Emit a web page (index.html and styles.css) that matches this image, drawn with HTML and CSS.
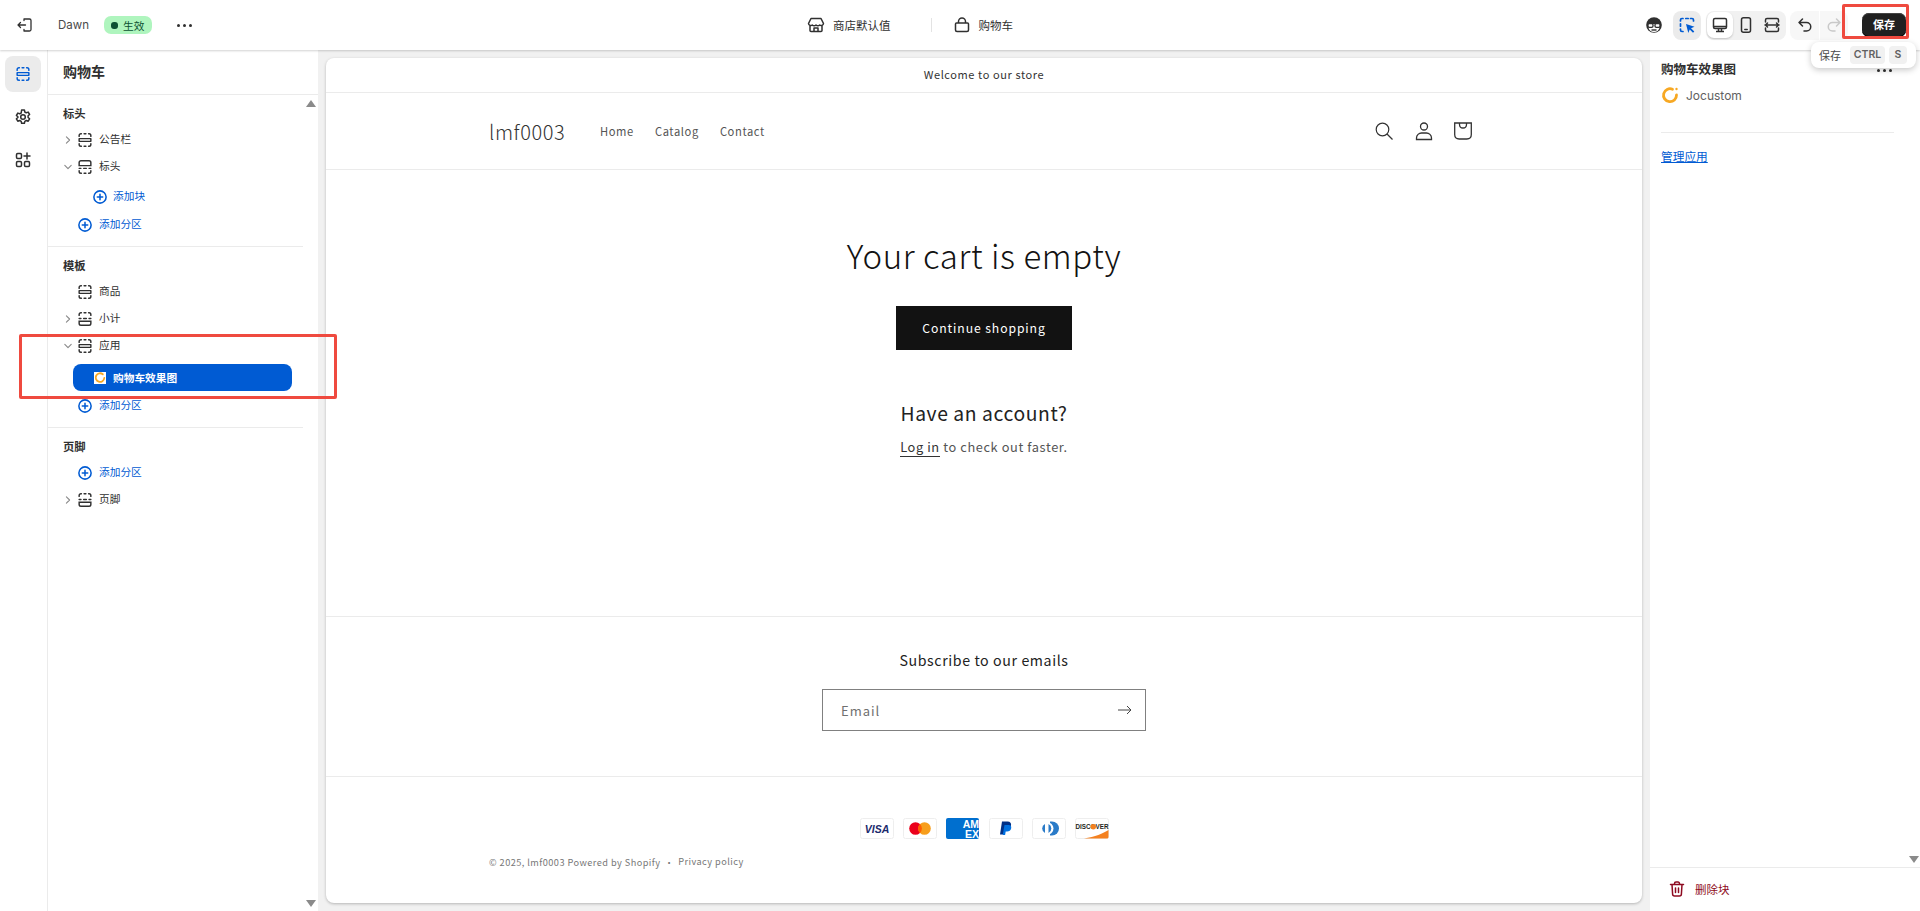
FILE: index.html
```html
<!DOCTYPE html>
<html lang="zh-CN">
<head>
<meta charset="utf-8">
<title>Dawn - 购物车</title>
<link rel="stylesheet" href="styles.css">
</head>
<body>
<svg class="defs" width="0" height="0">
  <defs>
    <g id="sec" fill="none" stroke="currentColor" stroke-width="1.600" stroke-linecap="round">
      <path d="M3.500 6V5A2 2 0 0 1 5.500 3H6M9 3h2M14 3h.5A2 2 0 0 1 16.500 5V6"/>
      <path d="M3.500 8.500h13M3.500 11.500h13M3.500 8.500v3M16.500 8.500v3"/>
      <path d="M3.500 14V15A2 2 0 0 0 5.500 17H6M9 17h2M14 17h.5A2 2 0 0 0 16.500 15V14"/>
    </g>
    <g id="sec-head" fill="none" stroke="currentColor" stroke-width="1.600" stroke-linecap="round">
      <path d="M5.500 3h9A2 2 0 0 1 16.500 5V8.500h-13V5A2 2 0 0 1 5.500 3Z"/>
      <path d="M3.500 11.500h2M8.500 11.500h3M14.500 11.500h2M3.500 14V15A2 2 0 0 0 5.500 17H6M9 17h2M14 17h.5A2 2 0 0 0 16.500 15V14"/>
    </g>
    <g id="sec-foot" fill="none" stroke="currentColor" stroke-width="1.600" stroke-linecap="round">
      <path d="M3.500 6V5A2 2 0 0 1 5.500 3H6M9 3h2M14 3h.5A2 2 0 0 1 16.500 5V6M3.500 9.500h2M8.500 9.500h3M14.500 9.500h2"/>
      <path d="M3.500 12.500h13V15a2 2 0 0 1-2 2h-9a2 2 0 0 1-2-2Z"/>
    </g>
    <g id="plus" fill="none" stroke="#005bd3" stroke-width="1.700" stroke-linecap="round">
      <circle cx="10" cy="10" r="6.800"/>
      <path d="M10 7v6M7 10h6"/>
    </g>
    <g id="chev-r" fill="none" stroke="#8a8a8a" stroke-width="1.400" stroke-linecap="round" stroke-linejoin="round"><path d="M8 6l4 4-4 4"/></g>
    <g id="chev-d" fill="none" stroke="#8a8a8a" stroke-width="1.400" stroke-linecap="round" stroke-linejoin="round"><path d="M6 8l4 4 4-4"/></g>
  </defs>
</svg>

<div class="app">
  <header class="topbar">
    <div class="top-left">
      <svg class="ic20 exit" viewBox="0 0 20 20"><path d="M9 4h5.500A1.500 1.500 0 0 1 16 5.500v9a1.500 1.500 0 0 1-1.500 1.500H9M10.500 10H3M5.500 7.500L3 10l2.500 2.500M9 4v1.500M9 16v-1.500" fill="none" stroke="currentColor" stroke-width="1.300" stroke-linecap="round" stroke-linejoin="round"/></svg>
      <span class="theme">Dawn</span>
      <span class="badge"><i class="badge-dot"></i>生效</span>
      <span class="dots"><i></i><i></i><i></i></span>
    </div>
    <div class="top-center">
      <svg class="ic20" viewBox="0 0 20 20"><path d="M5 3.500h10l2.500 5a2.300 2.300 0 0 1-3.800 1.500 2.500 2.500 0 0 1-3.700 0 2.500 2.500 0 0 1-3.700 0A2.300 2.300 0 0 1 2.500 8.500ZM4 10.500v5a1 1 0 0 0 1 1h10a1 1 0 0 0 1-1v-5M8 16.500v-3.500h4v3.500" fill="none" stroke="currentColor" stroke-width="1.500" stroke-linejoin="round"/></svg>
      <span class="center-label">商店默认值</span>
      <i class="vline"></i>
      <svg class="ic20" viewBox="0 0 20 20"><path d="M6.500 8V6.500a3.500 3.500 0 0 1 7 0V8M4.500 8h11A1 1 0 0 1 16.500 9v6a1.500 1.500 0 0 1-1.500 1.500H5A1.500 1.500 0 0 1 3.500 15V9a1 1 0 0 1 1-1Z" fill="none" stroke="currentColor" stroke-width="1.500" stroke-linejoin="round"/></svg>
      <span class="center-label">购物车</span>
    </div>
    <div class="top-right">
      <svg class="ic20 glasses" viewBox="0 0 20 20"><circle cx="10" cy="10" r="7.800" fill="currentColor"/><circle cx="10" cy="11.500" r="5.600" fill="#fff"/><path d="M4 6h12v3H4Z" fill="currentColor"/><rect x="4" y="8.500" width="5" height="3.800" rx="1.300" fill="#fff" stroke="currentColor" stroke-width="1.300"/><rect x="11" y="8.500" width="5" height="3.800" rx="1.300" fill="#fff" stroke="currentColor" stroke-width="1.300"/><path d="M7.500 15h5" stroke="currentColor" stroke-width="1.400"/></svg>
      <span class="tool inspector">
        <svg class="ic20" viewBox="0 0 20 20"><path d="M3.500 6V5A1.500 1.500 0 0 1 5 3.500H6M8.800 3.500h2.400M13.500 3.500H15A1.500 1.500 0 0 1 16.500 5V6M3.500 8.800v2.400M3.500 14V15A1.500 1.500 0 0 0 5 16.500H6" fill="none" stroke="#005bd3" stroke-width="1.700" stroke-linecap="round"/><path d="M9 9l8.500 2.800-3.500 1.400 3.300 3.300-1.300 1.300-3.300-3.300-1.400 3.500Z" fill="#005bd3"/></svg>
      </span>
      <span class="viewports">
        <span class="vp vp-on"><svg class="ic20" viewBox="0 0 20 20"><path d="M5 3.500h10A1.500 1.500 0 0 1 16.500 5v6.500H3.500V5A1.500 1.500 0 0 1 5 3.500ZM3.500 11.500V12A1.500 1.500 0 0 0 5 13.500h10a1.500 1.500 0 0 0 1.500-1.500v-.5M8.500 13.500v3M11.500 13.500v3M6 16.500h8" fill="none" stroke="currentColor" stroke-width="1.500" stroke-linejoin="round"/></svg></span>
        <span class="vp"><svg class="ic20" viewBox="0 0 20 20"><rect x="5.500" y="2.800" width="9" height="14.400" rx="2" fill="none" stroke="currentColor" stroke-width="1.500"/><path d="M8.800 14.500h2.400" stroke="currentColor" stroke-width="1.500" stroke-linecap="round"/></svg></span>
        <span class="vp"><svg class="ic20" viewBox="0 0 20 20"><path d="M3.500 7V5A1.500 1.500 0 0 1 5 3.500h10A1.500 1.500 0 0 1 16.500 5v2M3.500 13v2A1.500 1.500 0 0 0 5 16.500h10a1.500 1.500 0 0 0 1.500-1.500v-2M3 10h14M5.500 8l-2 2 2 2M14.500 8l2 2-2 2" fill="none" stroke="currentColor" stroke-width="1.500" stroke-linecap="round" stroke-linejoin="round"/></svg></span>
      </span>
      <span class="history">
        <svg class="ic20" viewBox="0 0 20 20"><path d="M7.500 4L4 7.500 7.500 11M4 7.500h7.500a4 4 0 0 1 0 8.500H9" fill="none" stroke="currentColor" stroke-width="1.500" stroke-linecap="round" stroke-linejoin="round"/></svg>
        <i class="history-sep"></i>
        <svg class="ic20 redo" viewBox="0 0 20 20"><path d="M12.500 4L16 7.500 12.500 11M16 7.500H8.500a4 4 0 0 0 0 8.500H11" fill="none" stroke="currentColor" stroke-width="1.500" stroke-linecap="round" stroke-linejoin="round"/></svg>
      </span>
      <button class="save" type="button">保存</button>
    </div>
  </header>

  <div class="workspace">
    <nav class="rail">
      <span class="rail-btn rail-on"><svg class="ic18 blue" viewBox="0 0 20 20"><use href="#sec"/></svg></span>
      <span class="rail-btn"><svg class="ic20" viewBox="0 0 20 20"><path d="M8.600 3h2.800l.4 2 1.500.8 1.900-.7 1.400 2.400-1.500 1.300v1.700l1.500 1.300-1.400 2.400-1.900-.7-1.500.8-.4 2H8.600l-.4-2-1.500-.8-1.900.7-1.400-2.400 1.500-1.300V9.800L3.400 8.500l1.400-2.400 1.900.7 1.500-.8Z" fill="none" stroke="currentColor" stroke-width="1.500" stroke-linejoin="round"/><circle cx="10" cy="10" r="2.300" fill="none" stroke="currentColor" stroke-width="1.500"/></svg></span>
      <span class="rail-btn"><svg class="ic20" viewBox="0 0 20 20"><g fill="none" stroke="currentColor" stroke-width="1.500"><rect x="3.500" y="3.500" width="5" height="5" rx="1.200"/><rect x="3.500" y="11.500" width="5" height="5" rx="1.200"/><rect x="11.500" y="11.500" width="5" height="5" rx="1.200"/><path d="M14 3v6M11 6h6" stroke-linecap="round"/></g></svg></span>
    </nav>

    <aside class="sidebar">
      <h1 class="side-title">购物车</h1>
      <div class="side-scroll">
        <section class="group">
          <h2 class="group-title">标头</h2>
          <div class="row"><svg class="chev" viewBox="0 0 20 20"><use href="#chev-r"/></svg><svg class="ic20" viewBox="0 0 20 20"><use href="#sec"/></svg><span>公告栏</span></div>
          <div class="row"><svg class="chev" viewBox="0 0 20 20"><use href="#chev-d"/></svg><svg class="ic20" viewBox="0 0 20 20"><use href="#sec-head"/></svg><span>标头</span></div>
          <div class="row row-add row-sub"><svg class="ic20" viewBox="0 0 20 20"><use href="#plus"/></svg><span>添加块</span></div>
          <div class="row row-add"><svg class="ic20" viewBox="0 0 20 20"><use href="#plus"/></svg><span>添加分区</span></div>
        </section>
        <section class="group">
          <h2 class="group-title">模板</h2>
          <div class="row"><i class="chev"></i><svg class="ic20" viewBox="0 0 20 20"><use href="#sec"/></svg><span>商品</span></div>
          <div class="row"><svg class="chev" viewBox="0 0 20 20"><use href="#chev-r"/></svg><svg class="ic20" viewBox="0 0 20 20"><use href="#sec-foot"/></svg><span>小计</span></div>
          <div class="row"><svg class="chev" viewBox="0 0 20 20"><use href="#chev-d"/></svg><svg class="ic20" viewBox="0 0 20 20"><use href="#sec"/></svg><span>应用</span></div>
          <div class="row-selected">
            <span class="app-thumb"><svg viewBox="0 0 12 12" width="12" height="12"><path d="M8.800 2.300A4.300 4.300 0 1 0 10.300 6" fill="none" stroke="#f7a823" stroke-width="1.800" stroke-linecap="round"/></svg></span>
            <span>购物车效果图</span>
          </div>
          <div class="row row-add"><svg class="ic20" viewBox="0 0 20 20"><use href="#plus"/></svg><span>添加分区</span></div>
        </section>
        <section class="group group-last">
          <h2 class="group-title">页脚</h2>
          <div class="row row-add"><svg class="ic20" viewBox="0 0 20 20"><use href="#plus"/></svg><span>添加分区</span></div>
          <div class="row"><svg class="chev" viewBox="0 0 20 20"><use href="#chev-r"/></svg><svg class="ic20" viewBox="0 0 20 20"><use href="#sec-foot"/></svg><span>页脚</span></div>
        </section>
      </div>
      <i class="arrow-up arrow-side-up"></i>
      <i class="arrow-down arrow-side-down"></i>
    </aside>

    <main class="canvas">
      <div class="store">
        <div class="announce">Welcome to our store</div>
        <div class="store-header">
          <div class="store-brand">
            <span class="logo">lmf0003</span>
            <span class="store-nav"><a>Home</a><a>Catalog</a><a>Contact</a></span>
          </div>
          <div class="store-icons">
            <svg class="ic-store" viewBox="0 0 20 20"><circle cx="8.500" cy="8.500" r="6.300" fill="none" stroke="currentColor" stroke-width="1.200"/><path d="M13 13l5.500 5.500" stroke="currentColor" stroke-width="1.200"/></svg>
            <svg class="ic-store" viewBox="0 0 20 20"><circle cx="10" cy="5.500" r="3.500" fill="none" stroke="currentColor" stroke-width="1.300"/><path d="M2.500 18.500v-1.500c0-3 2.500-5 5-5h5c2.500 0 5 2 5 5v1.500Z" fill="none" stroke="currentColor" stroke-width="1.300"/></svg>
            <svg class="ic-store" viewBox="0 0 20 20"><path d="M1.700 2h16.600v11.500c0 3-1.500 4.500-4.500 4.500H6.200c-3 0-4.500-1.500-4.500-4.500Z" fill="none" stroke="currentColor" stroke-width="1.300"/><path d="M6.500 2v1.500c0 2 1.500 3.500 3.500 3.500s3.500-1.500 3.500-3.500V2" fill="none" stroke="currentColor" stroke-width="1.300"/></svg>
          </div>
        </div>
        <div class="cart">
          <h2 class="cart-title">Your cart is empty</h2>
          <a class="cart-btn">Continue shopping</a>
          <h3 class="cart-account">Have an account?</h3>
          <p class="cart-login"><a class="u">Log in</a> to check out faster.</p>
        </div>
        <div class="subscribe">
          <h4 class="sub-title">Subscribe to our emails</h4>
          <div class="email">
            <span>Email</span>
            <svg viewBox="0 0 14 10" width="14" height="10"><path d="M0 5h13M9 1l4 4-4 4" fill="none" stroke="#444" stroke-width="1"/></svg>
          </div>
        </div>
        <div class="store-footer">
          <div class="pays">
            <svg class="pay" viewBox="0 0 34 21"><rect x=".5" y=".5" width="33" height="20" rx="2" fill="#fff" stroke="#eee"/><text x="17" y="15" text-anchor="middle" class="t-visa">VISA</text></svg>
            <svg class="pay" viewBox="0 0 34 21"><rect x=".5" y=".5" width="33" height="20" rx="2" fill="#fff" stroke="#eee"/><circle cx="12.500" cy="10.500" r="6.300" fill="#eb001b"/><circle cx="21.500" cy="10.500" r="6.300" fill="#f79e1b"/><path d="M17 6a6.300 6.300 0 0 1 0 9 6.300 6.300 0 0 1 0-9Z" fill="#ff5f00"/></svg>
            <svg class="pay" viewBox="0 0 34 21"><rect width="33" height="21" rx="2" fill="#006fcf"/><text x="33" y="10" text-anchor="end" class="t-amex">AM</text><text x="33" y="19.500" text-anchor="end" class="t-amex">EX</text></svg>
            <svg class="pay" viewBox="0 0 34 21"><rect x=".5" y=".5" width="33" height="20" rx="2" fill="#fff" stroke="#eee"/><path d="M13 3.500h5.500c2.800 0 4 1.700 3.500 4-.6 2.800-2.800 4-5 4h-1.500l-.8 5H11Z" fill="#003087"/><path d="M15.500 7h4.200c1.800 0 2.900 1.100 2.500 3.200-.4 2.100-2.200 3.300-4 3.300h-1.500l-.6 3.500h-2.400Z" fill="#0070e0"/></svg>
            <svg class="pay" viewBox="0 0 34 21"><rect x=".5" y=".5" width="33" height="20" rx="2" fill="#fff" stroke="#eee"/><path d="M18 3.500h2a7 7 0 0 1 0 14h-2Z" fill="#2a7bc8"/><circle cx="15" cy="10.500" r="6.500" fill="#fff"/><path d="M13 6a5 5 0 0 0 0 9Z" fill="#2a7bc8"/><path d="M16.500 6a5 5 0 0 1 0 9Z" fill="#2a7bc8"/></svg>
            <svg class="pay" viewBox="0 0 34 21"><rect x=".5" y=".5" width="33" height="20" rx="2" fill="#fff" stroke="#eee"/><path d="M9 20.500C20 19 28 15.500 33.500 12V19a1.500 1.500 0 0 1-1.500 1.500Z" fill="#f48120"/><text x="17" y="11" text-anchor="middle" class="t-disc">DISCOVER</text><circle cx="18.300" cy="8.800" r="2.700" fill="#f48120"/></svg>
          </div>
          <div class="legal"><span>© 2025, lmf0003 Powered by Shopify</span><span class="sep">·</span><span class="privacy">Privacy policy</span></div>
        </div>
      </div>
    </main>

    <aside class="inspector-panel">
      <div class="panel-body">
        <div class="panel-head"><h2 class="panel-title">购物车效果图</h2><span class="dots"><i></i><i></i><i></i></span></div>
        <div class="panel-app">
          <svg viewBox="0 0 18 18" width="18" height="18"><path d="M11.500 3.200A6.500 6.500 0 1 0 15.500 9" fill="none" stroke="#f7a823" stroke-width="2.800" stroke-linecap="round"/><circle cx="15.500" cy="3" r="1.200" fill="#f7a823"/></svg>
          <span>Jocustom</span>
        </div>
        <hr class="panel-rule">
        <a class="panel-link">管理应用</a>
      </div>
      <div class="panel-foot">
        <svg class="ic20" viewBox="0 0 20 20"><path d="M3.500 5.500h13M7.500 5.500V4.500A1.500 1.500 0 0 1 9 3h2a1.500 1.500 0 0 1 1.500 1.500v1M5 5.500l.6 9.500A2 2 0 0 0 7.600 17h4.800a2 2 0 0 0 2-2l.6-9.500M8.500 9v4.500M11.500 9v4.500" fill="none" stroke="#8e0b21" stroke-width="1.500" stroke-linecap="round" stroke-linejoin="round"/></svg>
        <span>删除块</span>
      </div>
      <i class="arrow-down arrow-panel-down"></i>
    </aside>
  </div>

  <div class="tooltip"><span>保存</span><kbd>CTRL</kbd><kbd>S</kbd></div>
  <div class="mark mark-row"></div>
  <div class="mark mark-save"></div>
</div>
</body>
</html>
```
FILE: styles.css
```css
* { box-sizing: border-box; }
html, body { margin: 0; height: 100%; overflow: hidden; }
body { font-family: Inter, "Noto Sans CJK SC", sans-serif; font-size: 12px; color: #303030; background: #f1f1f1; }
h1, h2, h3, h4, p { margin: 0; }
a { color: inherit; }
i { display: block; }
.defs { position: absolute; }
.ic20 { width: 20px; height: 20px; flex: none; display: block; color: #303030; }
.ic18 { width: 18px; height: 18px; flex: none; display: block; }
.blue { color: #005bd3; }

.app { position: relative; width: 1920px; height: 911px; display: flex; flex-direction: column; }

/* top bar */
.topbar { height: 50px; flex: none; background: #fff; display: flex; align-items: center; position: relative; z-index: 2; box-shadow: 0 1px 2px rgba(0,0,0,.18); }
.top-left { width: 806px; flex: none; display: flex; align-items: center; padding-left: 15px; }
.theme { margin-left: 23px; font-size: 11.500px; color: #4a4a4a; }
.badge { margin-left: 15px; height: 18px; width: 48px; border-radius: 7px; background: #aff5be; display: flex; align-items: center; padding-left: 7px; gap: 5px; font-size: 10.700px; color: #0c5132; }
.badge-dot { width: 7px; height: 7px; border-radius: 3px; background: #0c5132; }
.dots { display: inline-flex; gap: 3px; }
.dots i { width: 3px; height: 3px; border-radius: 50%; background: #303030; }
.top-left .dots { margin-left: 25px; }
.top-center { display: flex; align-items: center; }
.center-label { font-size: 11.500px; color: #303030; }
.top-center .ic20 { margin-right: 7px; }
.vline { width: 1px; height: 14px; background: #e3e3e3; margin: 0 20px 0 40px; }
.top-right { margin-left: auto; display: flex; align-items: center; padding-right: 14px; }
.glasses { margin-right: 9px; }
.tool { width: 28px; height: 29px; border-radius: 8px; display: flex; align-items: center; justify-content: center; }
.inspector { background: #ebebeb; }
.viewports { margin-left: 5px; width: 80px; height: 29px; background: #f1f1f1; border-radius: 8px; display: flex; align-items: center; padding: 1px; }
.vp { width: 26px; height: 26px; display: flex; align-items: center; justify-content: center; border-radius: 7px; }
.vp-on { background: #fff; box-shadow: 0 1px 2px rgba(0,0,0,.2); }
.history { margin-left: 4px; width: 58px; height: 29px; background: #f7f7f7; border-radius: 8px; display: flex; align-items: center; padding-left: 5px; }
.history-sep { width: 1px; height: 29px; background: #fff; margin: 0 4px; }
.redo { color: #c9c9c9; }
.save { margin-left: 14px; width: 44px; height: 24px; border: 0; border-radius: 7px; background: #202020; color: #fff; font: 600 11px Inter, "Noto Sans CJK SC", sans-serif; padding: 0 0 3px; box-shadow: inset 0 -1px 0 #000, inset 0 1px 0 #444; }

/* workspace */
.workspace { flex: 1; min-height: 0; display: flex; }
.rail { width: 48px; flex: none; background: #fff; border-right: 1px solid #ebebeb; padding: 6px 5px 0; display: flex; flex-direction: column; gap: 7px; }
.rail-btn { width: 36px; height: 36px; border-radius: 8px; display: flex; align-items: center; justify-content: center; }
.rail-on { background: #ebebeb; }

.sidebar { width: 270px; flex: none; background: #fff; position: relative; display: flex; flex-direction: column; }
.side-title { height: 45px; flex: none; font-size: 14px; font-weight: 600; line-height: 44px; padding-left: 15px; border-bottom: 1px solid #ebebeb; }
.group { width: 255px; padding-top: 9px; border-bottom: 1px solid #ebebeb; padding-bottom: 8px; }
.group-last { border-bottom: 0; padding-top: 9px; }
.group-title { font-size: 11.300px; font-weight: 600; height: 21px; line-height: 21px; padding-left: 15px; margin-bottom: 1px; }
.row { height: 27px; display: flex; align-items: center; padding-left: 12px; font-size: 10.700px; color: #303030; }
.row > span { margin-left: 4px; position: relative; top: -1px; }
.chev { width: 16px; height: 16px; flex: none; margin-right: -1px; }
.row .ic20 { width: 18px; height: 18px; margin: 0 1px; }
.row-add { padding-left: 27px; color: #005bd3; }
.row-sub { padding-left: 42px; height: 29px; margin-top: 2px; }
.row-sub > span { margin-left: 3px; }
.row-selected { margin: 5px 0 1px 25px; width: 219px; height: 27px; border-radius: 8px; background: #005bd3; color: #fff; font-size: 10.700px; font-weight: 600; display: flex; align-items: center; padding-left: 21px; gap: 7px; }
.app-thumb { width: 12px; height: 12px; background: #fff; display: block; flex: none; }
.app-thumb svg { display: block; }
.arrow-up, .arrow-down { position: absolute; width: 0; height: 0; border-left: 5px solid transparent; border-right: 5px solid transparent; }
.arrow-up { border-bottom: 7px solid #8a8a8a; }
.arrow-down { border-top: 7px solid #8a8a8a; }
.arrow-side-up { right: 2px; top: 50px; }
.arrow-side-down { right: 2px; bottom: 4px; }

/* storefront */
.canvas { flex: 1; min-width: 0; padding: 8px 8px 8px; background: #f1f1f1; }
.store { height: 845px; background: #fff; border-radius: 8px; box-shadow: 0 1px 3px rgba(0,0,0,.25); font-family: "Noto Sans CJK SC", sans-serif; font-weight: 400; color: #121212; letter-spacing: .6px; overflow: hidden; }
.announce { height: 35px; border-bottom: 1px solid #ebebeb; text-align: center; font-size: 11px; line-height: 33px; color: #333; }
.store-header { height: 77px; border-bottom: 1px solid #ebebeb; padding: 0 164px 0 163px; display: flex; align-items: center; justify-content: space-between; }
.store-brand { display: flex; align-items: center; }
.logo { font-size: 20px; font-weight: 300; color: #333; width: 111px; }
.store-nav { display: flex; gap: 21px; font-size: 11.200px; color: #555; }
.store-icons { display: flex; gap: 19.500px; padding-right: 5px; color: #333; }
.ic-store { width: 20px; height: 20px; display: block; }
.cart { height: 447px; border-bottom: 1px solid #ebebeb; display: flex; flex-direction: column; align-items: center; padding-top: 58px; }
.cart-title { font-size: 33px; font-weight: 300; line-height: 54px; letter-spacing: .6px; }
.cart-btn { margin-top: 24px; width: 176px; height: 44px; background: #121212; color: #fff; font-size: 12.200px; display: flex; align-items: center; justify-content: center; letter-spacing: .9px; }
.cart-account { margin-top: 46px; font-size: 19.300px; font-weight: 400; line-height: 34px; color: #222; }
.cart-login { margin-top: 1px; font-size: 12.800px; line-height: 32px; color: #555; }
.u { color: #333; border-bottom: 1px solid #333; }
.subscribe { height: 160px; border-bottom: 1px solid #ebebeb; display: flex; flex-direction: column; align-items: center; padding-top: 30px; }
.sub-title { font-size: 14.200px; font-weight: 400; line-height: 26px; color: #222; letter-spacing: .6px; }
.email { margin-top: 16px; width: 324px; height: 42px; border: 1px solid #808080; display: flex; align-items: center; justify-content: space-between; padding: 0 13px 0 18px; font-size: 13px; color: #707070; letter-spacing: 1px; }
.store-footer { height: 126px; padding-top: 41px; }
.pays { display: flex; justify-content: center; gap: 9px; }
.pay { width: 34px; height: 21px; display: block; }
.t-visa { font: italic 700 10.500px "Liberation Sans", sans-serif; fill: #1a2a6c; letter-spacing: 0; }
.t-amex { font: 700 10.500px "Liberation Sans", sans-serif; fill: #fff; letter-spacing: 0; }
.t-disc { font: 700 6.300px "Liberation Sans", sans-serif; fill: #231f20; letter-spacing: 0; }
.legal { margin-top: 16px; padding-left: 163px; display: flex; align-items: center; font-size: 9.200px; color: #777; letter-spacing: .45px; }
.sep { margin: 0 4px 0 4px; }
.privacy { position: relative; top: -1px; }

/* right panel */
.inspector-panel { width: 270px; flex: none; background: #fff; position: relative; display: flex; flex-direction: column; }
.panel-body { flex: 1; padding: 11px 11px 0 11px; }
.panel-head { display: flex; align-items: center; justify-content: space-between; padding-right: 17px; }
.panel-title { font-size: 12.500px; font-weight: 600; line-height: 18px; color: #303030; }
.panel-app { margin-top: 7px; display: flex; align-items: center; gap: 7px; font-size: 12px; color: #616161; height: 18px; }
.panel-rule { margin: 28px 15px 0 0; border: 0; border-top: 1px solid #ebebeb; width: 233px; }
.panel-link { display: inline-block; margin-top: 14px; font-size: 11.700px; color: #005bd3; text-decoration: underline; }
.panel-foot { height: 44px; flex: none; border-top: 1px solid #ebebeb; display: flex; align-items: center; gap: 8px; padding: 0 0 1px 17px; font-size: 11.500px; color: #8e0b21; }
.arrow-panel-down { right: 1px; bottom: 48px; }

/* overlays */
.tooltip { position: absolute; left: 1811px; top: 42px; width: 105px; height: 26px; background: #fff; border-radius: 8px; box-shadow: 0 2px 6px rgba(0,0,0,.22); display: flex; align-items: center; padding-left: 8px; font-size: 11px; color: #4a4a4a; z-index: 5; }
.tooltip kbd { font: 600 10.500px Inter, sans-serif; color: #616161; background: #f1f1f1; border-radius: 4px; height: 18px; line-height: 18px; text-align: center; }
.tooltip kbd:nth-of-type(1) { width: 35px; margin-left: 9px; }
.tooltip kbd:nth-of-type(2) { width: 18px; margin-left: 4px; }
.mark { position: absolute; border: 3px solid #ef4a3f; border-radius: 2px; z-index: 6; pointer-events: none; }
.mark-row { left: 19px; top: 334px; width: 318px; height: 65px; }
.mark-save { left: 1842px; top: 4px; width: 67px; height: 35px; }
```
